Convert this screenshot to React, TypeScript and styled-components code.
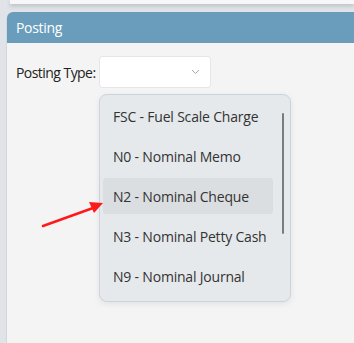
import React from "react";
import styled, { createGlobalStyle } from "styled-components";

const Global = createGlobalStyle`
  html, body { margin: 0; padding: 0; background: #e0e4e8; }
  body { font-family: "Segoe UI", "Open Sans", "Noto Sans", sans-serif; overflow: hidden; }
`;

const Page = styled.div`
  width: 354px;
  height: 343px;
  display: flex;
  flex-direction: column;
  gap: 8px;
  padding-left: 6px;
  box-sizing: border-box;
  position: relative;
  overflow: hidden;
`;

const TopCard = styled.div`
  height: 4px;
  margin-left: 4px;
  background: #f7f7f7;
  box-shadow: 0 2px 4px rgba(0, 0, 0, 0.18);
`;

const Panel = styled.section`
  flex: 1;
  display: flex;
  flex-direction: column;
  background: #f4f4f4;
  border-top-left-radius: 7px;
  border-left: 1px solid #d3d8de;
`;

const Header = styled.div`
  height: 31px;
  background: #6a9dbc;
  color: #ffffff;
  font-size: 14px;
  letter-spacing: -0.3px;
  display: flex;
  align-items: center;
  padding-left: 9px;
  border-top-left-radius: 6px;
`;

const Body = styled.div`
  padding: 13px 9px;
  display: flex;
  flex-direction: column;
`;

const Row = styled.div`
  display: flex;
  align-items: center;
`;

const Label = styled.label`
  width: 83px;
  font-size: 14px;
  letter-spacing: -0.55px;
  color: #222;
  padding-top: 1px;
  white-space: nowrap;
`;

const SelectWrap = styled.div`
  position: relative;
`;

const Select = styled.div`
  width: 112px;
  height: 32px;
  box-sizing: border-box;
  background: #ffffff;
  border: 1px solid #e4e6e8;
  border-radius: 3px;
  display: flex;
  align-items: center;
  justify-content: flex-end;
  padding-right: 10px;
`;

const Menu = styled.ul`
  position: absolute;
  left: 0;
  top: 38px;
  width: 192px;
  height: 208px;
  box-sizing: border-box;
  margin: 0;
  list-style: none;
  background: #e5e9ec;
  border: 1px solid #cbd4dc;
  border-radius: 8px;
  box-shadow: 0 2px 6px rgba(0, 0, 0, 0.08);
  padding: 3px 17px 7px 3px;
  display: flex;
  flex-direction: column;
  gap: 4px;
  overflow: hidden;
`;

const Item = styled.li<{ $active?: boolean }>`
  height: 36px;
  flex-shrink: 0;
  display: flex;
  align-items: center;
  padding-left: 10px;
  font-size: 14px;
  letter-spacing: -0.2px;
  color: #333;
  border-radius: 3px;
  background: ${(p) => (p.$active ? "#dbdee1" : "transparent")};
`;

const Thumb = styled.div`
  position: absolute;
  right: 6px;
  top: 18px;
  width: 2px;
  height: 121px;
  background: #7a7b7c;
  border-radius: 1px;
`;

const Arrow = styled.svg`
  position: absolute;
  left: 39px;
  top: 196px;
`;

const options = [
  "FSC - Fuel Scale Charge",
  "N0 - Nominal Memo",
  "N2 - Nominal Cheque",
  "N3 - Nominal Petty Cash",
  "N9 - Nominal Journal",
];

export default function App() {
  return (
    <>
      <Global />
      <Page>
        <TopCard />
        <Panel>
          <Header>Posting</Header>
          <Body>
            <Row>
              <Label>Posting Type:</Label>
              <SelectWrap>
                <Select>
                  <svg width="9" height="6" viewBox="0 0 9 6">
                    <path d="M1 1 L4.5 4.5 L8 1" fill="none" stroke="#a9a9a9" strokeWidth="1" />
                  </svg>
                </Select>
                <Menu>
                  {options.map((o, i) => (
                    <Item key={o} $active={i === 2}>
                      {o}
                    </Item>
                  ))}
                  <Thumb />
                </Menu>
              </SelectWrap>
            </Row>
          </Body>
        </Panel>
        <Arrow width="70" height="36" viewBox="0 0 70 36">
          <line x1="4" y1="30" x2="54" y2="12" stroke="#ff1a1a" strokeWidth="2.5" strokeLinecap="round" />
          <polygon points="64,7 50,6 55,17" fill="#ff1a1a" />
        </Arrow>
      </Page>
    </>
  );
}
